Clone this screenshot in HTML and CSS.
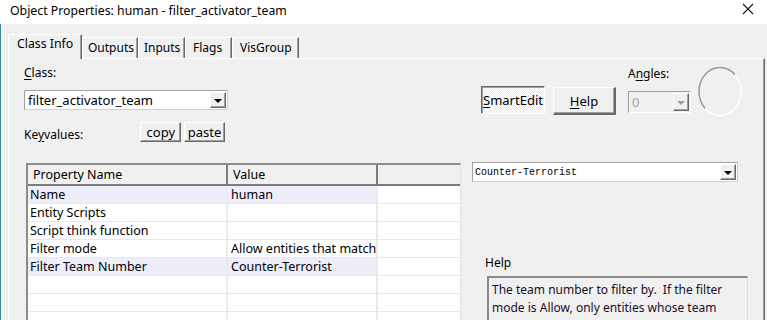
FILE: index.html
```html
<!DOCTYPE html>
<html>
<head>
	<link rel="stylesheet" href="styles.css">
</head>
<body>
	<div class="titlebar">
		<span class="title">Object Properties: human - filter_activator_team</span>
		<svg class="close" width="12" height="12" viewBox="0 0 12 12">
			<path d="M1 1 L11 11 M11 1 L1 11" stroke="#1a1a1a" stroke-width="1.1" fill="none"/>
		</svg>
	</div>
	<div class="window">
		<div class="tabs">
			<div class="tab active">Class Info</div>
			<div class="tab w-outputs">Outputs</div>
			<div class="tab w-inputs">Inputs</div>
			<div class="tab w-flags">Flags</div>
			<div class="tab w-vis">VisGroup</div>
		</div>
		<div class="panel">
			<div class="top">
				<div class="classbox">
					<div class="label"><u>C</u>lass:</div>
					<div class="combo classcombo">
						<span class="combotext">filter_activator_team</span>
						<span class="dropbtn"><i class="tri"></i></span>
					</div>
					<div class="kvrow">
						<span class="kvlabel">Ke<u>y</u>values:</span>
						<button class="btn small">copy</button>
						<button class="btn small">paste</button>
					</div>
				</div>
				<div class="actions">
					<button class="btn pressed"><u>S</u>martEdit</button>
					<button class="btn big"><u>H</u>elp</button>
				</div>
				<div class="angles">
					<div class="label">A<u>n</u>gles:</div>
					<div class="combo anglecombo">
						<span class="combotext">0</span>
						<span class="dropbtn"><i class="tri"></i></span>
					</div>
				</div>
				<svg class="dial" width="46" height="51" viewBox="0 0 46 51">
					<defs>
						<linearGradient id="rim" x1="0" y1="0" x2="1" y2="1">
							<stop offset="0" stop-color="#9c9c9c"/>
							<stop offset="0.5" stop-color="#9c9c9c"/>
							<stop offset="0.5" stop-color="#ffffff"/>
							<stop offset="1" stop-color="#ffffff"/>
						</linearGradient>
					</defs>
					<ellipse cx="23" cy="25.5" rx="21" ry="24" stroke="url(#rim)" stroke-width="1.6" fill="none"/>
					<rect x="22" y="25" width="1" height="1" fill="#fff"/>
				</svg>
			</div>
			<div class="bottom">
				<div class="propgrid">
					<div class="hdr">
						<div class="hcell c1">Property Name</div>
						<div class="hcell c2">Value</div>
						<div class="hcell c3"></div>
					</div>
					<div class="row sel"><div class="cell c1">Name</div><div class="cell c2">human</div><div class="cell c3"></div></div>
					<div class="row"><div class="cell c1">Entity Scripts</div><div class="cell c2"></div><div class="cell c3"></div></div>
					<div class="row"><div class="cell c1">Script think function</div><div class="cell c2"></div><div class="cell c3"></div></div>
					<div class="row"><div class="cell c1">Filter mode</div><div class="cell c2">Allow entities that match criteria</div><div class="cell c3"></div></div>
					<div class="row sel"><div class="cell c1">Filter Team Number</div><div class="cell c2">Counter-Terrorist</div><div class="cell c3"></div></div>
					<div class="row"><div class="cell c1"></div><div class="cell c2"></div><div class="cell c3"></div></div>
					<div class="row"><div class="cell c1"></div><div class="cell c2"></div><div class="cell c3"></div></div>
					<div class="row"><div class="cell c1"></div><div class="cell c2"></div><div class="cell c3"></div></div>
				</div>
				<div class="side">
					<div class="combo valuecombo">
						<span class="combotext mono">Counter-Terrorist</span>
						<span class="dropbtn"><i class="tri"></i></span>
					</div>
					<div class="helplabel">Help</div>
					<div class="helpbox">The team number to filter by.&nbsp; If the filter mode is Allow, only entities whose team number matches the given team will pass the filter.</div>
				</div>
			</div>
		</div>
	</div>
</body>
</html>
```
FILE: styles.css
```css
* {
	margin: 0;
	padding: 0;
	box-sizing: border-box;
}

html, body {
	width: 767px;
	height: 320px;
	overflow: hidden;
	background: #f0f0f0;
	font-family: "Noto Sans", "Liberation Sans", sans-serif;
	font-size: 12px;
	color: #000;
}

u {
	text-decoration: underline;
	text-underline-offset: 2px;
}

.titlebar {
	height: 24px;
	background: #fff;
	display: flex;
	align-items: flex-start;
	justify-content: space-between;
	padding: 0 13px 0 10px;
}
.title {
	font-size: 12.3px;
	line-height: 22px;
	color: #000;
}
.close {
	margin-top: 3px;
}

.window {
	height: 296px;
	border-left: 1px solid #2f8f9c;
	padding-left: 7px;
}

/* tab strip */
.tabs {
	display: flex;
	align-items: flex-end;
	height: 34px;
	padding-top: 10px;
	position: relative;
	z-index: 2;
}
.tab {
	height: 21px;
	border-top: 1px solid #fff;
	border-left: 1px solid #fff;
	border-right: 1px solid #696969;
	box-shadow: inset -1px 0 #a0a0a0;
	padding: 2px 0 0 5px;
	line-height: 16px;
	font-size: 12px;
	white-space: nowrap;
	background: #f0f0f0;
}
.tab.active {
	height: 25px;
	width: 74px;
	padding: 1px 0 0 8px;
	margin-bottom: -1px;
	font-size: 12.3px;
}
.w-outputs { width: 56px; }
.w-inputs { width: 47px; }
.w-flags { width: 47px; padding-left: 7px; }
.w-vis { width: 67px; padding-left: 7px; }

.panel {
	width: 757px;
	height: 262px;
	border-top: 1px solid #fff;
	border-left: 1px solid #fff;
	border-right: 1px solid #696969;
	box-shadow: inset -1px 0 #a0a0a0;
	padding: 7px 0 0 15px;
}

/* top area */
.top {
	display: flex;
	height: 76px;
}
.classbox {
	width: 204px;
}
.label {
	height: 14px;
	line-height: 14px;
}
.combo {
	display: flex;
	align-items: center;
	justify-content: space-between;
	background: #fff;
	border: 1px solid #cfcfcf;
	border-top-color: #a0a0a0;
	border-left-color: #a0a0a0;
}
.combotext {
	padding-left: 3px;
	white-space: nowrap;
}
.dropbtn {
	width: 16px;
	height: 16px;
	margin-right: 1px;
	background: #f0f0f0;
	border: 1px solid #fff;
	border-right-color: #696969;
	border-bottom-color: #696969;
	box-shadow: inset -1px -1px #a0a0a0;
	display: flex;
	align-items: center;
	justify-content: center;
}
.tri {
	width: 0;
	height: 0;
	border-left: 4px solid transparent;
	border-right: 4px solid transparent;
	border-top: 4px solid #000;
	margin-top: 1px;
}
.classcombo {
	margin-top: 10px;
	height: 20px;
	font-size: 13px;
}
.kvrow {
	display: flex;
	align-items: center;
	margin-top: 12px;
	height: 20px;
}
.kvlabel {
	width: 117px;
	padding-top: 4px;
}

.btn {
	font-family: inherit;
	font-size: 12px;
	color: #000;
	background: #f0f0f0;
	border: 1px solid #fff;
	border-right-color: #696969;
	border-bottom-color: #696969;
	box-shadow: inset -1px -1px #a0a0a0;
}
.btn.small {
	width: 41px;
	height: 20px;
	margin-right: 3px;
	font-size: 13px;
	line-height: 16px;
}
.actions {
	display: flex;
	margin-left: 253px;
	margin-top: 20px;
	gap: 8px;
	align-items: flex-start;
}
.btn.pressed {
	width: 64px;
	height: 28px;
	border: 1px solid #696969;
	border-right-color: #fff;
	border-bottom-color: #fff;
	box-shadow: inset 1px 1px #a0a0a0;
	background: repeating-conic-gradient(#fff 0 25%, #ececec 0 50%) 0 0 / 2px 2px;
	font-size: 13px;
}
.btn.big {
	width: 63px;
	height: 28px;
	margin-top: 1px;
	font-size: 13px;
	border-right: 2px solid #696969;
	border-bottom: 2px solid #696969;
	box-shadow: inset -1px -1px #a0a0a0;
}

.angles {
	margin-left: 12px;
	width: 63px;
}
.angles .label {
	margin-top: 1px;
}
.anglecombo {
	margin-top: 10px;
	height: 22px;
	background: #f0f0f0;
	border-color: #a0a0a0 #fff #fff #a0a0a0;
	color: #a0a0a0;
	font-size: 13px;
}
.anglecombo .dropbtn {
	height: 18px;
}
.anglecombo .tri {
	border-top-color: #a0a0a0;
}
.dial {
	margin-left: 6px;
}

/* bottom area */
.bottom {
	display: flex;
	margin-top: 20px;
}
.propgrid {
	margin-left: 2px;
	width: 435px;
	height: 160px;
	background: #fff;
	border-top: 2px solid #8c8c8c;
	border-left: 2px solid #8c8c8c;
	border-right: 1px solid #e3e3e3;
	margin-top: 1px;
}
.hdr, .row {
	display: grid;
	grid-template-columns: 200px 150px 1fr;
}
.hdr {
	height: 21px;
	background: #f0f0f0;
	border-bottom: 2px solid #7c7c7c;
}
.hcell {
	padding-left: 5px;
	line-height: 19px;
	font-size: 12.5px;
}
.hcell.c1, .hcell.c2 {
	border-right: 2px solid #7c7c7c;
}
.row {
	height: 18px;
	border-bottom: 1px solid #e8e8e8;
}
.cell {
	padding-left: 2px;
	line-height: 18px;
	white-space: nowrap;
	overflow: hidden;
	font-size: 12.5px;
}
.cell.c1, .cell.c2 {
	border-right: 2px solid #ececec;
}
.row.sel .c1, .row.sel .c2 {
	background: #eeeefb;
}
.cell.c2 {
	padding-left: 3px;
}

.side {
	margin-left: 11px;
}
.valuecombo {
	width: 266px;
	height: 20px;
}
.mono {
	font-family: "Liberation Mono", monospace;
	font-size: 10px;
	padding-left: 2px;
}
.helplabel {
	margin-top: 74px;
	margin-left: 13px;
	height: 20px;
	line-height: 14px;
}
.helpbox {
	margin-left: 15px;
	width: 261px;
	height: 60px;
	border-top: 2px solid #8c8c8c;
	border-left: 2px solid #8c8c8c;
	border-right: 1px solid #dcdcdc;
	padding: 3px 0 0 3px;
	line-height: 18px;
	color: #1a0f26;
}
```
